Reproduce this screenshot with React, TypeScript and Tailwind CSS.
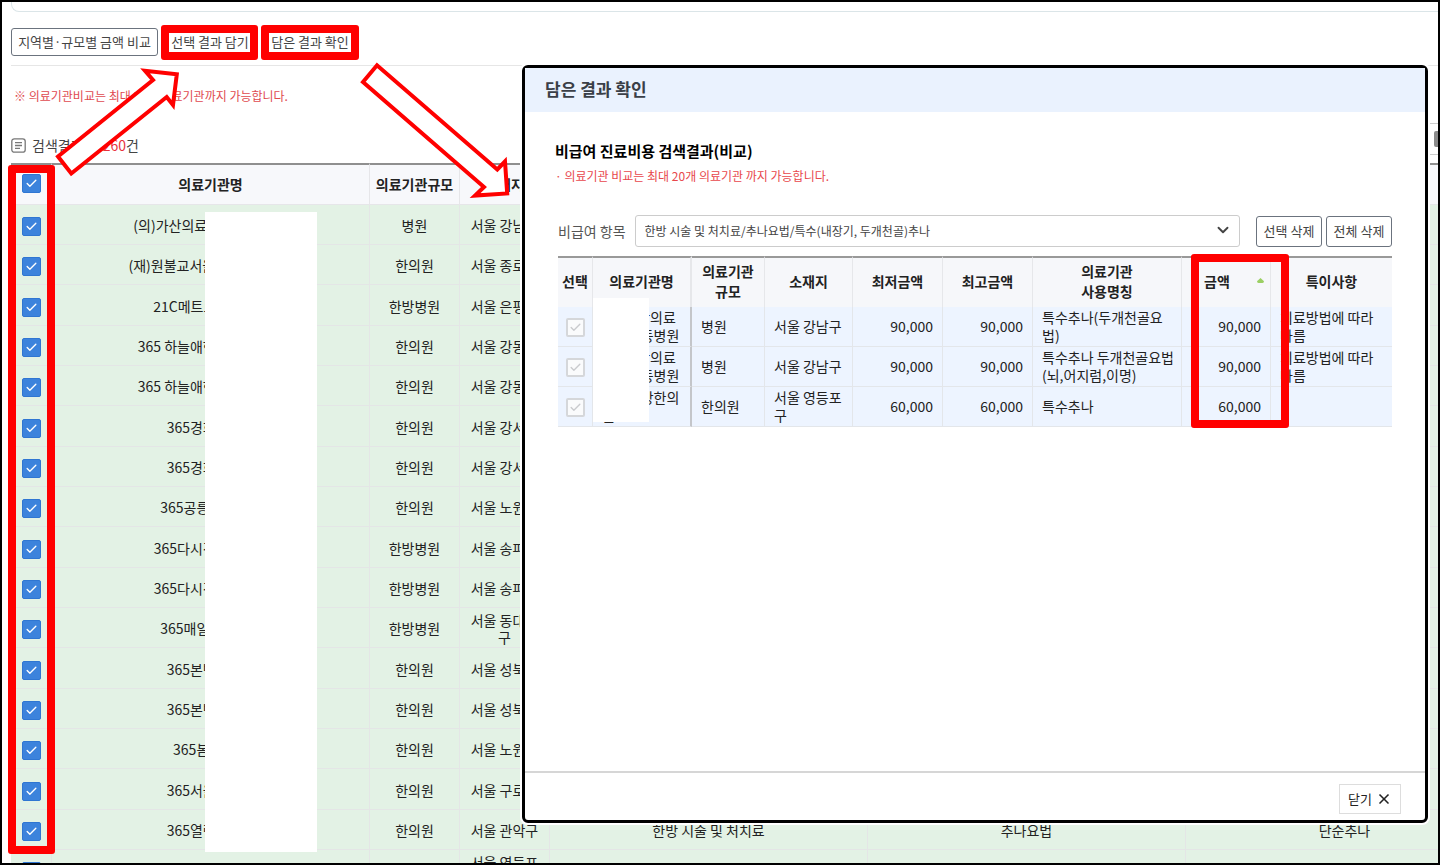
import { useState } from 'react';
import { Check, ChevronDown, X } from 'lucide-react';

interface Hospital {
  name: string;
  scale: string;
  region: string;
}

const hospitals: Hospital[] = [
  { name: '(의)가산의료재단 광동병원', scale: '병원', region: '서울 강남구' },
  { name: '(재)원불교서울보화당한의원', scale: '한의원', region: '서울 종로구' },
  { name: '21C메트로한방병원', scale: '한방병원', region: '서울 은평구' },
  { name: '365 하늘애한의원 천호점', scale: '한의원', region: '서울 강동구' },
  { name: '365 하늘애한의원 강동점', scale: '한의원', region: '서울 강동구' },
  { name: '365경희한의원', scale: '한의원', region: '서울 강서구' },
  { name: '365경희한의원', scale: '한의원', region: '서울 강서구' },
  { name: '365공릉본한의원', scale: '한의원', region: '서울 노원구' },
  { name: '365다시건한방병원', scale: '한방병원', region: '서울 송파구' },
  { name: '365다시건한방병원', scale: '한방병원', region: '서울 송파구' },
  { name: '365매일한방병원', scale: '한방병원', region: '서울 동대문\n구' },
  { name: '365본병한의원', scale: '한의원', region: '서울 성북구' },
  { name: '365본병한의원', scale: '한의원', region: '서울 성북구' },
  { name: '365봄한의원', scale: '한의원', region: '서울 노원구' },
  { name: '365서울한의원', scale: '한의원', region: '서울 구로구' },
  { name: '365열린한의원', scale: '한의원', region: '서울 관악구' },
  { name: '365예한의원', scale: '한의원', region: '서울 영등포\n구' },
];

const results = [
  {
    name: '(의)가산의료\n재단광동병원',
    scale: '병원',
    region: '서울 강남구',
    price: '90,000',
    title: '특수추나(두개천골요\n법)',
    note: '치료방법에 따라\n다름',
  },
  {
    name: '(의)가산의료\n재단광동병원',
    scale: '병원',
    region: '서울 강남구',
    price: '90,000',
    title: '특수추나 두개천골요법\n(뇌,어지럼,이명)',
    note: '치료방법에 따라\n다름',
  },
  {
    name: '자생한방한의\n원',
    scale: '한의원',
    region: '서울 영등포\n구',
    price: '60,000',
    title: '특수추나',
    note: '',
  },
];

const TOOL_BUTTON = 'rounded-[3px] border border-[#6b737e] bg-white text-[13px] leading-5 whitespace-nowrap text-[#444]';
const MAIN_TH = 'border-t-2 border-r border-b border-t-[#8f8f8f] border-r-[#e6e6e9] border-b-[#e6e6e9] bg-[#f7f8fb] px-0 pt-0 pb-[2px] font-bold';
const MAIN_TD = 'border-r border-b border-[#e4e6e6] bg-[#e3f2e5] px-0 pt-[2px] pb-0 leading-[17px] whitespace-pre';
const TH = 'border-t-2 border-r border-t-[#999] border-r-[#e6e7ea] bg-[#f6f7fa] px-0 pt-0 pb-1 font-bold whitespace-pre leading-5';
const TD = 'border-r border-b border-[#e3e6ea] bg-[#edf4ff] px-[9px] pt-0 pb-[2px] leading-[18px] whitespace-pre';

function RowCheck({ label }: { label: string }) {
  const [on, setOn] = useState(true);
  return (
    <label className="relative mx-auto block size-[19px]">
      <input
        type="checkbox"
        aria-label={label}
        checked={on}
        onChange={() => setOn(!on)}
        className="block size-[19px] appearance-none rounded-[2px] border border-[#a9b7c6] bg-white checked:border-[#2f76d2] checked:bg-[#3c83dc]"
      />
      {on && <Check className="pointer-events-none absolute top-[3px] left-[3px] size-[13px] text-white" strokeWidth={2.5} />}
    </label>
  );
}

function ListIcon() {
  return (
    <svg className="size-[15px]" viewBox="0 0 15 15" fill="none" stroke="#777" strokeWidth="1.3">
      <rect x="0.8" y="0.8" width="13.4" height="13.4" rx="2.5" />
      <path d="M4 4.7h7M4 7.5h7M4 10.3h5" />
    </svg>
  );
}

// 배경: 검색결과 화면
function SearchPage() {
  return (
    <div className="pl-[9px]">
      <div className="h-[10px] rounded-bl-[8px] border-b border-l border-[#dbe5e8]" />
      <div className="mt-4 flex gap-1 border-b border-[#e6e6e6] pb-[9px]">
        <button className={`${TOOL_BUTTON} h-7 w-[147px]`}>지역별·규모별 금액 비교</button>
        <button className={`${TOOL_BUTTON} h-7 w-24`}>선택 결과 담기</button>
        <button className={`${TOOL_BUTTON} h-7 w-24`}>담은 결과 확인</button>
      </div>
      <p className="mt-5 pl-[3px] text-xs leading-5 text-[#e04a4f]">※ 의료기관비교는 최대 20개 의료기관까지 가능합니다.</p>
      <div className="mt-[17px] flex h-8 items-end justify-between">
        <div className="flex items-center gap-[6px] text-sm leading-5 text-[#444]">
          <ListIcon />
          <span>
            검색결과 총 <span className="text-[#e8323c]">260</span>건
          </span>
        </div>
        <div className="flex h-8 w-5 items-center justify-end border-y border-[#ccc]">
          <div className="h-4 w-1 rounded-l-[2px] bg-[#8b8b8b]" />
        </div>
      </div>
      <table className="mt-2 w-full min-w-[1493px] table-fixed border-separate border-spacing-0 text-center text-sm text-[#222]">
        <colgroup>
          <col className="w-[41px]" />
          <col className="w-[318px]" />
          <col className="w-[90px]" />
          <col className="w-[90px]" />
          <col className="w-[318px]" />
          <col className="w-[318px]" />
          <col />
        </colgroup>
        <thead>
          <tr className="h-[42px]">
            <th className={MAIN_TH}>
              <RowCheck label="전체 선택" />
            </th>
            <th className={MAIN_TH}>의료기관명</th>
            <th className={MAIN_TH}>의료기관규모</th>
            <th className={MAIN_TH}>소재지</th>
            <th className={MAIN_TH}>중분류</th>
            <th className={MAIN_TH}>소분류</th>
            <th className={MAIN_TH}>상세분류</th>
          </tr>
        </thead>
        <tbody>
          {hospitals.map((h, i) => (
            <tr key={i} className="h-10 nth-[3n]:h-[41px]">
              <td className="border-r border-b border-[#e4e6e6] bg-[#e3f2e5] px-0 pt-1 pb-0">
                <RowCheck label={h.name} />
              </td>
              <td className={MAIN_TD}>{h.name}</td>
              <td className={MAIN_TD}>{h.scale}</td>
              <td className={MAIN_TD}>{h.region}</td>
              <td className={MAIN_TD}>한방 시술 및 처치료</td>
              <td className={MAIN_TD}>추나요법</td>
              <td className={MAIN_TD}>단순추나</td>
            </tr>
          ))}
        </tbody>
      </table>
    </div>
  );
}

function ResultTable() {
  return (
    <table className="mt-[9px] w-full table-fixed border-separate border-spacing-0 text-sm text-[#222]">
      <colgroup>
        <col className="w-[35px]" />
        <col className="w-[99px]" />
        <col className="w-[73px]" />
        <col className="w-[88px]" />
        <col className="w-[90px]" />
        <col className="w-[90px]" />
        <col className="w-[149px]" />
        <col className="w-[89px]" />
        <col />
      </colgroup>
      <thead>
        <tr className="h-[51px]">
          <th className={TH}>선택</th>
          <th className={`${TH} border-r-2 border-r-[#c4c6ca]`}>의료기관명</th>
          <th className={TH}>{'의료기관\n규모'}</th>
          <th className={TH}>소재지</th>
          <th className={TH}>최저금액</th>
          <th className={TH}>최고금액</th>
          <th className={TH}>{'의료기관\n사용명칭'}</th>
          <th className={TH}>
            <div className="flex items-center justify-between pr-[6px] pl-[22px]">
              금액
              <svg className="h-[5px] w-[7px]" viewBox="0 0 7 5" fill="#9bcf63">
                <path d="M3.5 0 L7 3.2 Q7 5 5.5 5 H1.5 Q0 5 0 3.2 Z" />
              </svg>
            </div>
          </th>
          <th className={`${TH} border-r-0`}>특이사항</th>
        </tr>
      </thead>
      <tbody>
        {results.map((r, i) => (
          <tr key={i} className="h-10">
            <td className="border-r border-b border-[#e3e6ea] bg-[#edf4ff] px-0 pt-[2px] pb-0">
              <label className="relative mx-auto block size-[19px]">
                <input
                  type="checkbox"
                  aria-label={r.name}
                  className="block size-[19px] appearance-none rounded-[2px] border-2 border-[#d5d7da] bg-[#fafbfc]"
                />
                <Check className="pointer-events-none absolute top-[3px] left-[3px] size-[13px] text-[#c9cbce]" strokeWidth={2.5} />
              </label>
            </td>
            <td className={`${TD} border-r-2 border-r-[#c4c6ca]`}>{r.name}</td>
            <td className={TD}>{r.scale}</td>
            <td className={TD}>{r.region}</td>
            <td className={`${TD} text-right`}>{r.price}</td>
            <td className={`${TD} text-right`}>{r.price}</td>
            <td className={TD}>{r.title}</td>
            <td className={`${TD} text-right`}>{r.price}</td>
            <td className={`${TD} border-r-0`}>{r.note}</td>
          </tr>
        ))}
      </tbody>
    </table>
  );
}

// 담은 결과 확인 팝업
function ResultDialog() {
  return (
    <section className="absolute top-[63px] right-[10px] bottom-10 left-[520px] flex flex-col rounded-[6px] border-[3px] border-black bg-white shadow-[0_0_0_2px_#fff]">
      <header className="flex h-11 items-center bg-[#eaf2fe] px-5 pb-[2px]">
        <h1 className="text-[17px] leading-6 font-bold text-[#3a3f47]">담은 결과 확인</h1>
      </header>
      <div className="flex-1 px-[30px] pt-[29px]">
        <h2 className="text-[15px] leading-5 font-bold text-black">비급여 진료비용 검색결과(비교)</h2>
        <p className="mt-[5px] text-xs leading-5 text-[#e8474c]">· 의료기관 비교는 최대 20개 의료기관 까지 가능합니다.</p>
        <div className="mt-[29px] px-[3px]">
          <div className="flex h-8 items-center">
            <label htmlFor="item" className="text-sm whitespace-nowrap text-[#555]">
              비급여 항목
            </label>
            <div className="relative ml-[9px] h-8 flex-1">
              <select id="item" className="h-8 w-full appearance-none rounded-[3px] border border-[#ccc] bg-white px-[9px] text-xs text-[#444]">
                <option>한방 시술 및 처치료/추나요법/특수(내장기, 두개천골)추나</option>
              </select>
              <ChevronDown className="pointer-events-none absolute top-[6px] right-2 size-[18px] text-[#444]" strokeWidth={2.5} />
            </div>
            <button className={`${TOOL_BUTTON} ml-4 h-[31px] w-[66px]`}>선택 삭제</button>
            <button className={`${TOOL_BUTTON} ml-1 h-[31px] w-[66px]`}>전체 삭제</button>
          </div>
          <ResultTable />
        </div>
      </div>
      <footer className="flex h-[49px] items-center justify-end border-t-2 border-[#d6d6d6] pt-[5px] pr-6">
        <button className="flex h-[30px] w-[62px] items-center justify-center gap-1 border border-[#ddd] bg-white text-[13px] text-[#222]">
          닫기
          <X className="size-4" strokeWidth={2.5} />
        </button>
      </footer>
    </section>
  );
}

// 가림막, 강조 박스, 화살표
function Annotations() {
  return (
    <div className="pointer-events-none absolute inset-0">
      <div className="absolute top-[210px] left-[203px] h-[640px] w-28 bg-white" />
      <div className="absolute top-[296px] left-[591px] h-[124px] w-14 bg-white" />
      <div className="absolute top-[23px] left-[159px] h-[35px] w-[97px] rounded-[3px] border-8 border-[#ff0000]" />
      <div className="absolute top-[23px] left-[259px] h-[35px] w-[98px] rounded-[3px] border-8 border-[#ff0000]" />
      <div className="absolute top-[163px] left-[6px] h-[689px] w-[47px] rounded-[3px] border-8 border-[#ff0000]" />
      <div className="absolute top-[252px] left-[1189px] h-[174px] w-[98px] rounded-[3px] border-8 border-[#ff0000]" />
      <svg className="absolute -top-0.5 -left-0.5 h-[220px] w-[520px]" viewBox="0 0 520 220" fill="#fff" stroke="#ff0000" strokeWidth="4">
        <path d="M58 156.5 L153 80 L145 70.8 L176.8 74.2 L173 105 L166.7 97 L71.3 173.5 Z" />
        <path d="M363 82 L377 65.3 L497.3 169.5 L505 161.5 L507.2 193.5 L475 195.6 L484 187 Z" />
      </svg>
    </div>
  );
}

export default function App() {
  return (
    <main className="relative h-screen overflow-hidden border-2 border-black bg-white font-['Noto_Sans_CJK_KR',sans-serif]">
      <SearchPage />
      <ResultDialog />
      <Annotations />
    </main>
  );
}
